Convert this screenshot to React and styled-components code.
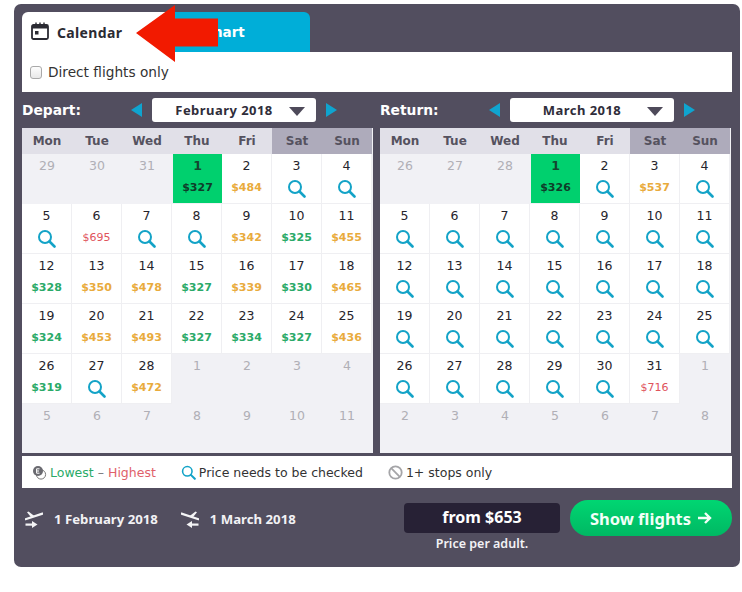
import React from 'react';
import styled, { createGlobalStyle } from 'styled-components';

const Global = createGlobalStyle`
  html, body { margin: 0; padding: 0; background: #fff; }
  body { font-family: "DejaVu Sans", "Liberation Sans", sans-serif; }
  * { box-sizing: border-box; }
`;

const Panel = styled.div`
  position: relative;
  width: 726px;
  height: 563px;
  margin: 4px 0 0 14px;
  padding: 8px 8px 0;
  background: #524e5f;
  border-radius: 7px;
`;
const Tabs = styled.div`
  display: flex;
  height: 40px;
`;
const ActiveTab = styled.div`
  width: 144px;
  display: flex;
  align-items: center;
  gap: 8px;
  padding: 0 0 0 9px;
  background: #fff;
  border-radius: 6px 0 0 0;
  font-family: "Noto Sans", sans-serif;
  font-size: 14px;
  font-weight: 700;
  color: #2b2b33;
  letter-spacing: 0.35px;
`;
const ChartTab = styled.div`
  width: 144px;
  display: flex;
  align-items: center;
  padding-left: 37px;
  background: #00aed8;
  border-radius: 0 6px 0 0;
  font-size: 13.5px;
  font-weight: 700;
  color: #fff;
`;
const Filter = styled.label`
  height: 40px;
  display: flex;
  align-items: center;
  gap: 6px;
  padding: 0 0 1px 8px;
  background: #fff;
  font-size: 13.7px;
  color: #333;
`;
const Check = styled.input`
  appearance: none;
  width: 12px;
  height: 13px;
  margin: 1px 0 0;
  border: 1px solid #a9a9a9;
  border-radius: 3px;
  background: linear-gradient(#fdfdfd, #e8e8e8);
`;
const Columns = styled.div`
  display: flex;
  gap: 7px;
`;
const Column = styled.div`
  width: 351px;
`;
const NavRow = styled.div`
  height: 36px;
  display: flex;
  align-items: center;
`;
const NavLabel = styled.div`
  width: 109px;
  font-size: 13.8px;
  font-weight: 700;
  color: #fff;
`;
const Caret = styled.span`
  width: 0;
  height: 0;
  border-top: 7.5px solid transparent;
  border-bottom: 7.5px solid transparent;
  ${p => p.$dir === 'left'
    ? 'border-right: 11px solid #0fa4cf; margin-right: 10px;'
    : 'border-left: 11px solid #0fa4cf; margin-left: 10px;'}
`;
const MonthSelect = styled.div`
  position: relative;
  width: 164px;
  height: 24px;
  display: flex;
  align-items: center;
  justify-content: center;
  padding-right: 20px;
  background: #fff;
  border-radius: 3px;
  font-family: "Noto Sans", sans-serif;
  font-size: 13px;
  font-weight: 700;
  color: #2f2d3a;
  letter-spacing: 0.45px;
`;
const SelectCaret = styled.span`
  position: absolute;
  right: 11px;
  top: 9px;
  width: 0;
  height: 0;
  border-left: 8px solid transparent;
  border-right: 8px solid transparent;
  border-top: 9px solid #4e4a5a;
`;
const Grid = styled.div`
  display: grid;
  grid-template-columns: repeat(7, 50px);
  grid-template-rows: 26px repeat(6, 50px);
  height: 325px;
  width: 351px;
  padding-right: 1px;
  background: #f1f1f5;
  overflow: hidden;
`;
const Head = styled.div`
  display: flex;
  align-items: center;
  justify-content: center;
  background: ${p => (p.$weekend ? '#aeabbb' : '#e1e0e8')};
  font-size: 12px;
  font-weight: 700;
  color: #55525f;
`;
const bgOf = p => (p.$kind === 'best' ? '#00d06e' : p.$kind === 'off' ? '#f1f1f5' : '#fff');
const Cell = styled.div`
  display: flex;
  flex-direction: column;
  align-items: center;
  padding-top: 3px;
  background: ${bgOf};
  ${p => (p.$kind === 'best' ? 'margin: 0 0 1px 1px;' : '')}
  ${p => (p.$kind === 'off' || p.$kind === 'best' ? '' : 'border-right: 1px solid #efeff2; border-bottom: 1px solid #efeff2;')}
`;
const Day = styled.div`
  height: 17px;
  line-height: 17px;
  font-size: 12.5px;
  font-weight: ${p => (p.$kind === 'best' ? 700 : 400)};
  color: ${p => (p.$kind === 'off' ? '#b0afb6' : p.$kind === 'best' ? '#14452f' : '#26242c')};
`;
const priceColors = { g: '#2aaa68', o: '#e9ab3d', r: '#e0545c', best: '#0f3d2a' };
const Price = styled.div`
  margin-top: 7px;
  height: 14px;
  line-height: 14px;
  font-size: 11px;
  font-weight: ${p => (p.$tone === 'r' ? 400 : 700)};
  color: ${p => priceColors[p.$tone]};
`;
const GlassSlot = styled.div`
  margin-top: 5px;
  height: 19px;
`;
const Legend = styled.div`
  height: 32px;
  margin-top: 3px;
  display: flex;
  align-items: center;
  padding-left: 10px;
  background: #fff;
  font-size: 12.5px;
  color: #333;
`;
const LegendItem = styled.div`
  display: flex;
  align-items: center;
  gap: ${p => p.$inner}px;
  margin-right: ${p => p.$gap}px;
`;
const Low = styled.span` color: #2aaa68; `;
const High = styled.span` color: #e0606a; `;
const Dash = styled.span` color: #777; margin: 0 4px; `;
const Footer = styled.div`
  display: flex;
  align-items: flex-start;
  justify-content: space-between;
  padding-top: 12px;
`;
const Dates = styled.div`
  display: flex;
  align-items: center;
  gap: 23px;
  margin-top: 10px;
  padding-left: 3px;
`;
const DateItem = styled.div`
  display: flex;
  align-items: center;
  gap: 11px;
  font-family: "Noto Sans", sans-serif;
  font-size: 13.2px;
  font-weight: 700;
  color: #f2f2f5;
`;
const Cta = styled.div`
  display: flex;
  align-items: flex-start;
  gap: 10px;
`;
const PriceCol = styled.div`
  width: 156px;
  margin-top: 3px;
  text-align: center;
`;
const FromBox = styled.div`
  height: 30px;
  line-height: 29px;
  border-radius: 4px;
  background: #272135;
  font-family: "Noto Sans", sans-serif;
  font-size: 16px;
  font-weight: 700;
  color: #fff;
`;
const PerAdult = styled.div`
  margin-top: 2px;
  font-family: "Noto Sans", sans-serif;
  font-size: 12.5px;
  font-weight: 600;
  color: #f2f2f5;
`;
const ShowButton = styled.button`
  width: 162px;
  height: 36px;
  display: flex;
  align-items: center;
  justify-content: center;
  gap: 6px;
  border: 0;
  border-radius: 18px;
  background: linear-gradient(#00d672, #00b863);
  font: 700 16.5px "Noto Sans", sans-serif;
  color: #f2fff8;
`;
const ArrowOverlay = styled.svg`
  position: absolute;
  left: 120px;
  top: 0;
`;
const TabIcon = styled.svg`
  margin-top: -3px;
`;

const Glass = ({ size = 19, color = '#13a3c7' }) => (
  <svg width={size} height={size} viewBox="0 0 19 19" fill="none">
    <circle cx="8" cy="8" r="6" stroke={color} strokeWidth="2" />
    <path d="M12.5 12.5 L17.5 17.5" stroke={color} strokeWidth="2.6" strokeLinecap="round" />
  </svg>
);
const CalendarIcon = () => (
  <TabIcon width="18" height="18" viewBox="0 0 18 18" fill="none">
    <rect x="1" y="3" width="16" height="14" rx="1.5" stroke="#2b2b33" strokeWidth="1.8" />
    <rect x="1" y="3" width="16" height="3.5" fill="#2b2b33" />
    <path d="M5 0.5V3M9 0.5V3M13 0.5V3" stroke="#2b2b33" strokeWidth="1.4" />
    <rect x="4" y="9" width="3.5" height="3.5" fill="#2b2b33" />
  </TabIcon>
);
const CoinsIcon = () => (
  <svg width="15" height="15" viewBox="0 0 15 15" fill="none">
    <circle cx="9" cy="9.5" r="4.6" stroke="#777" strokeWidth="1" />
    <circle cx="6" cy="6" r="5" fill="#6a6a70" />
    <path d="M4.5 6h2.5M7.5 3.8H4.6v4.4h2.9" stroke="#fff" strokeWidth="1" />
  </svg>
);
const BanIcon = () => (
  <svg width="15" height="15" viewBox="0 0 15 15" fill="none">
    <circle cx="7.5" cy="7.5" r="6.2" stroke="#a5a5a8" strokeWidth="1.8" />
    <path d="M3.2 3.2L11.8 11.8" stroke="#a5a5a8" strokeWidth="1.8" />
  </svg>
);
const PlaneIcon = ({ flip }) => (
  <svg width="18" height="17" viewBox="0 0 18 17" fill="none" style={flip ? { transform: 'scaleX(-1)' } : undefined}>
    <path d="M0.5 8.2 L17.5 2.6" stroke="#f4f4f6" strokeWidth="2.2" strokeLinecap="round" />
    <path d="M3.5 0.5 L10 5.5 L6.5 6.8 L2 1.2 Z" fill="#f4f4f6" />
    <path d="M0.5 13.6 H8" stroke="#f4f4f6" strokeWidth="2.2" />
    <path d="M7 10 L12.5 13.6 L7 17 Z" fill="#f4f4f6" />
  </svg>
);
const ArrowIcon = () => (
  <svg width="15" height="14" viewBox="0 0 15 14" fill="none">
    <path d="M1 7 H13 M8 2 L13 7 L8 12" stroke="#f2fff8" strokeWidth="2.4" />
  </svg>
);
const RedArrow = () => (
  <ArrowOverlay width="100" height="70" viewBox="120 0 100 70">
    <polygon points="136,33 175,5 175,18.5 218,18.5 218,46.5 175,46.5 175,62" fill="#f21a00" />
  </ArrowOverlay>
);

const HEAD = ['Mon', 'Tue', 'Wed', 'Thu', 'Fri', 'Sat', 'Sun'];

const off = n => ({ d: n, kind: 'off' });
const q = n => ({ d: n, q: true });
const p = (n, price, tone) => ({ d: n, price, tone });
const range = (a, b, f) => Array.from({ length: b - a + 1 }, (_, i) => f(a + i));

const depart = [
  off(29), off(30), off(31),
  { d: 1, kind: 'best', price: 327, tone: 'best' },
  p(2, 484, 'o'), q(3), q(4),
  q(5), p(6, 695, 'r'), q(7), q(8), p(9, 342, 'o'), p(10, 325, 'g'), p(11, 455, 'o'),
  p(12, 328, 'g'), p(13, 350, 'o'), p(14, 478, 'o'), p(15, 327, 'g'), p(16, 339, 'o'), p(17, 330, 'g'), p(18, 465, 'o'),
  p(19, 324, 'g'), p(20, 453, 'o'), p(21, 493, 'o'), p(22, 327, 'g'), p(23, 334, 'g'), p(24, 327, 'g'), p(25, 436, 'o'),
  p(26, 319, 'g'), q(27), p(28, 472, 'o'), ...range(1, 4, off),
  ...range(5, 11, off),
];
const ret = [
  off(26), off(27), off(28),
  { d: 1, kind: 'best', price: 326, tone: 'best' },
  q(2), p(3, 537, 'o'), q(4),
  ...range(5, 30, q),
  p(31, 716, 'r'), off(1),
  ...range(2, 8, off),
];

const Calendar = ({ label, month, days }) => (
  <Column>
    <NavRow>
      <NavLabel>{label}</NavLabel>
      <Caret $dir="left" />
      <MonthSelect>{month}<SelectCaret /></MonthSelect>
      <Caret $dir="right" />
    </NavRow>
    <Grid>
      {HEAD.map((h, i) => <Head key={h} $weekend={i > 4}>{h}</Head>)}
      {days.map((c, i) => (
        <Cell key={i} $kind={c.kind}>
          <Day $kind={c.kind}>{c.d}</Day>
          {c.price && <Price $tone={c.tone}>${c.price}</Price>}
          {c.q && <GlassSlot><Glass /></GlassSlot>}
        </Cell>
      ))}
    </Grid>
  </Column>
);

export default function App() {
  return (
    <>
      <Global />
      <Panel>
        <Tabs>
          <ActiveTab><CalendarIcon />Calendar</ActiveTab>
          <ChartTab>Chart</ChartTab>
        </Tabs>
        <Filter><Check type="checkbox" />Direct flights only</Filter>
        <Columns>
          <Calendar label="Depart:" month="February 2018" days={depart} />
          <Calendar label="Return:" month="March 2018" days={ret} />
        </Columns>
        <Legend>
          <LegendItem $gap={25} $inner={3}>
            <CoinsIcon />
            <span><Low>Lowest</Low><Dash>–</Dash><High>Highest</High></span>
          </LegendItem>
          <LegendItem $gap={25} $inner={3}>
            <Glass size={15} />
            <span>Price needs to be checked</span>
          </LegendItem>
          <LegendItem $gap={0} $inner={3}>
            <BanIcon />
            <span>1+ stops only</span>
          </LegendItem>
        </Legend>
        <Footer>
          <Dates>
            <DateItem><PlaneIcon />1 February 2018</DateItem>
            <DateItem><PlaneIcon flip />1 March 2018</DateItem>
          </Dates>
          <Cta>
            <PriceCol>
              <FromBox>from $653</FromBox>
              <PerAdult>Price per adult.</PerAdult>
            </PriceCol>
            <ShowButton>Show flights<ArrowIcon /></ShowButton>
          </Cta>
        </Footer>
      </Panel>
      <RedArrow />
    </>
  );
}
